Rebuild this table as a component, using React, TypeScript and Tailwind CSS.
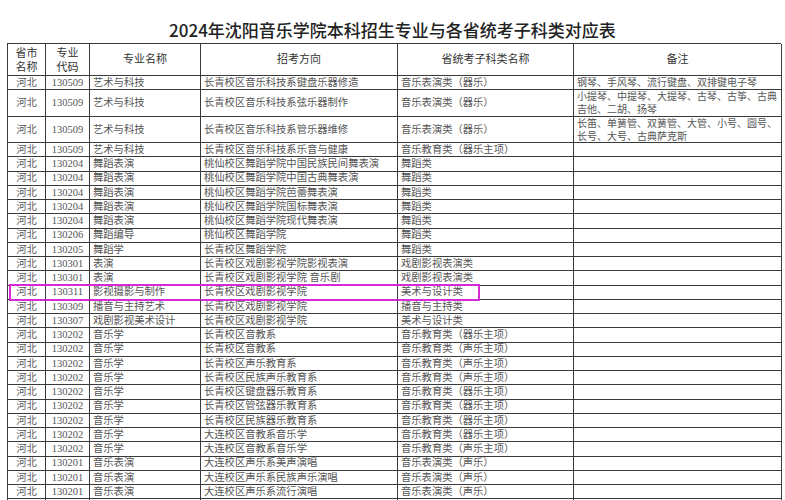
import React from 'react';

type Row = {
  code: string;
  name: string;
  dir: string;
  cat: string;
  note?: string[];
  h: string;
  mark?: boolean;
  blank?: boolean;
};

const grid = 'grid grid-cols-[38px_44px_111px_197px_176px_208px]';
const cell = 'flex items-center border-r border-b border-[#3a3a3a] overflow-hidden whitespace-nowrap';

const r = (code: string, name: string, dir: string, cat: string, extra: Partial<Row> = {}): Row => ({
  code,
  name,
  dir,
  cat,
  h: 'h-[14.25px]',
  ...extra,
});

const rows: Row[] = [
  r('130509', '艺术与科技', '长青校区音乐科技系键盘乐器修造', '音乐表演类（器乐）', {
    h: 'h-[14px]',
    note: ['钢琴、手风琴、流行键盘、双排键电子琴'],
  }),
  r('130509', '艺术与科技', '长青校区音乐科技系弦乐器制作', '音乐表演类（器乐）', {
    h: 'h-[27px]',
    note: ['小提琴、中提琴、大提琴、古琴、古筝、古典', '吉他、二胡、扬琴'],
  }),
  r('130509', '艺术与科技', '长青校区音乐科技系管乐器维修', '音乐表演类（器乐）', {
    h: 'h-[26px]',
    note: ['长笛、单簧管、双簧管、大管、小号、圆号、', '长号、大号、古典萨克斯'],
  }),
  r('130509', '艺术与科技', '长青校区音乐科技系乐音与健康', '音乐教育类（器乐主项）'),
  r('130204', '舞蹈表演', '桃仙校区舞蹈学院中国民族民间舞表演', '舞蹈类'),
  r('130204', '舞蹈表演', '桃仙校区舞蹈学院中国古典舞表演', '舞蹈类'),
  r('130204', '舞蹈表演', '桃仙校区舞蹈学院芭蕾舞表演', '舞蹈类'),
  r('130204', '舞蹈表演', '桃仙校区舞蹈学院国标舞表演', '舞蹈类'),
  r('130204', '舞蹈表演', '桃仙校区舞蹈学院现代舞表演', '舞蹈类'),
  r('130206', '舞蹈编导', '桃仙校区舞蹈学院', '舞蹈类'),
  r('130205', '舞蹈学', '长青校区舞蹈学院', '舞蹈类'),
  r('130301', '表演', '长青校区戏剧影视学院影视表演', '戏剧影视表演类'),
  r('130301', '表演', '长青校区戏剧影视学院 音乐剧', '戏剧影视表演类'),
  r('130311', '影视摄影与制作', '长青校区戏剧影视学院', '美术与设计类', { mark: true }),
  r('130309', '播音与主持艺术', '长青校区戏剧影视学院', '播音与主持类'),
  r('130307', '戏剧影视美术设计', '长青校区戏剧影视学院', '美术与设计类'),
  r('130202', '音乐学', '长青校区音教系', '音乐教育类（器乐主项）'),
  r('130202', '音乐学', '长青校区音教系', '音乐教育类（声乐主项）'),
  r('130202', '音乐学', '长青校区声乐教育系', '音乐教育类（声乐主项）'),
  r('130202', '音乐学', '长青校区民族声乐教育系', '音乐教育类（声乐主项）'),
  r('130202', '音乐学', '长青校区键盘器乐教育系', '音乐教育类（器乐主项）'),
  r('130202', '音乐学', '长青校区管弦器乐教育系', '音乐教育类（器乐主项）'),
  r('130202', '音乐学', '长青校区民族器乐教育系', '音乐教育类（器乐主项）'),
  r('130202', '音乐学', '大连校区音教系音乐学', '音乐教育类（器乐主项）'),
  r('130202', '音乐学', '大连校区音教系音乐学', '音乐教育类（声乐主项）'),
  r('130201', '音乐表演', '大连校区声乐系美声演唱', '音乐表演类（声乐）'),
  r('130201', '音乐表演', '大连校区声乐系民族声乐演唱', '音乐表演类（声乐）'),
  r('130201', '音乐表演', '大连校区声乐系流行演唱', '音乐表演类（声乐）'),
  r('', '', '', '', { blank: true }),
];

const TableRow = ({ row }: { row: Row }) => (
  <div className={`${grid} ${row.h} relative`}>
    <div className={`${cell} justify-center`}>{row.blank ? '' : '河北'}</div>
    <div className={`${cell} justify-center text-[10.5px]`}>{row.code}</div>
    <div className={`${cell} pl-[3px]`}>{row.name}</div>
    <div className={`${cell} pl-[3px]`}>{row.dir}</div>
    <div className={`${cell} pl-[3px]`}>{row.cat}</div>
    <div
      className={`${cell} pl-[3px] text-[10px] ${row.note && row.note.length > 1 ? 'flex-col !items-start justify-start leading-[13px]' : ''}`}
    >
      {row.note?.map((n) => (
        <span key={n}>{n}</span>
      ))}
    </div>
    {row.mark && (
      <div className="absolute left-[1px] top-[-2px] w-[471px] h-[17px] border-2 border-[#d52ad5]" />
    )}
  </div>
);

export default function App() {
  return (
    <div className="w-[785px] h-[500px] overflow-hidden bg-white font-['Liberation_Serif','Noto_Sans_CJK_SC',serif] text-[10.3px] text-[#555]">
      <div className="h-[43px] pt-[19px] text-center leading-[22px] text-[17px] font-medium text-[#222] font-['Noto_Sans_CJK_SC',sans-serif]">
        2024年沈阳音乐学院本科招生专业与各省统考子科类对应表
      </div>
      <div className="ml-[7px] w-[774px] border-l border-t border-[#3a3a3a]">
        <div className={`${grid} h-[32px] text-[11px] text-[#333]`}>
          <div className={`${cell} flex-col justify-center leading-[14px]`}>
            <span>省市</span>
            <span>名称</span>
          </div>
          <div className={`${cell} flex-col justify-center leading-[14px]`}>
            <span>专业</span>
            <span>代码</span>
          </div>
          <div className={`${cell} justify-center`}>专业名称</div>
          <div className={`${cell} justify-center`}>招考方向</div>
          <div className={`${cell} justify-center`}>省统考子科类名称</div>
          <div className={`${cell} justify-center`}>备注</div>
        </div>
        {rows.map((row, i) => (
          <TableRow key={i} row={row} />
        ))}
      </div>
    </div>
  );
}
